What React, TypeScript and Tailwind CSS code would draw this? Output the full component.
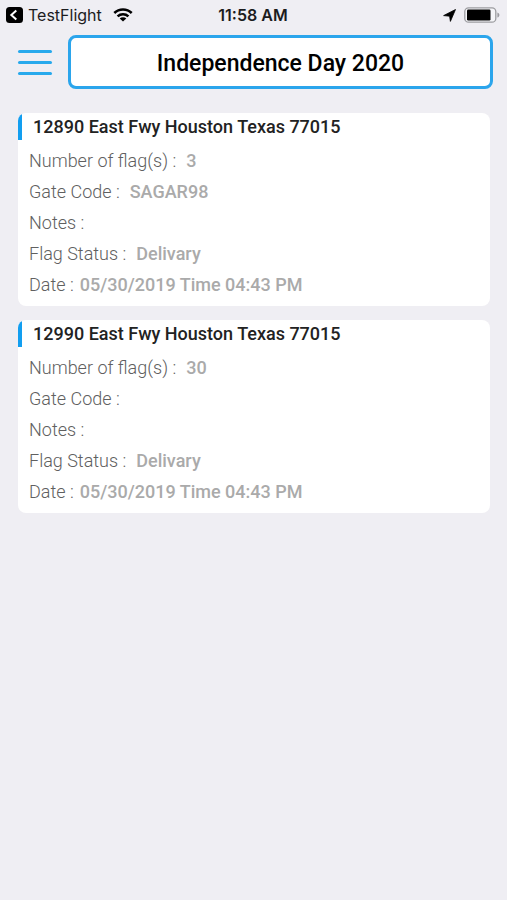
import React from 'react';

interface Stop {
  address: string;
  flags: string;
  gateCode: string;
  notes: string;
  status: string;
  date: string;
}

const stops: Stop[] = [
  {
    address: '12890 East Fwy Houston Texas 77015',
    flags: '3',
    gateCode: 'SAGAR98',
    notes: '',
    status: 'Delivary',
    date: '05/30/2019 Time 04:43 PM',
  },
  {
    address: '12990 East Fwy Houston Texas 77015',
    flags: '30',
    gateCode: '',
    notes: '',
    status: 'Delivary',
    date: '05/30/2019 Time 04:43 PM',
  },
];

const StatusBar: React.FC = () => (
  <div className="grid grid-cols-[1fr_auto_1fr] items-center h-[30px] pl-[6px] pr-[7px] font-['Inter',sans-serif] text-[#1c1c1e]">
    <div className="flex items-center">
      <button type="button" className="flex items-center" aria-label="Back to TestFlight">
        <svg width="17" height="16" viewBox="0 0 17 16" aria-hidden="true">
          <rect width="17" height="16" rx="3.5" fill="#000" />
          <path d="M10.3 3.4 5.3 8l5 4.6" fill="none" stroke="#fff" strokeWidth="2" />
        </svg>
        <span className="ml-[5px] text-[16px] leading-5">TestFlight</span>
      </button>
      <svg className="ml-[11px]" width="20" height="14" viewBox="0 0 20 14" fill="none" stroke="#000" strokeWidth="2.6" aria-hidden="true">
        <path d="M1.3 5a12.6 12.6 0 0 1 17.4 0" />
        <path d="M4.6 8.4a7.9 7.9 0 0 1 10.8 0" />
        <path d="M10 13.6 6.7 10.6a4.6 4.6 0 0 1 6.6 0z" fill="#000" stroke="none" />
      </svg>
    </div>
    <span className="text-[16px] leading-5 font-semibold">11:58 AM</span>
    <div className="flex items-center justify-end gap-2">
      <svg width="13" height="13" viewBox="0 0 13 13" aria-hidden="true">
        <path d="M12.5.5 7.4 12.4 6.6 7.2.6 6.6z" fill="#000" stroke="#000" strokeWidth="0.8" strokeLinejoin="round" />
      </svg>
      <svg width="36" height="16" viewBox="0 0 36 16" aria-hidden="true">
        <rect x="0.8" y="0.8" width="31" height="14.4" rx="3.8" fill="#f5f5f8" stroke="#9c9ca0" strokeWidth="1.3" />
        <rect x="3" y="2.6" width="23.5" height="10.8" rx="1.2" fill="#000" />
        <path d="M33.4 5.4c1.3.5 2 1.4 2 2.6s-.7 2.1-2 2.6z" fill="#9c9ca0" />
      </svg>
    </div>
  </div>
);

const Row: React.FC<{ label: string; value: string; tight?: boolean }> = ({ label, value, tight }) => (
  <div className={`flex items-center leading-[31px] ${tight ? 'gap-[6px]' : 'gap-[10px]'}`}>
    <dt className="font-light text-[#606060]">{label} :</dt>
    <dd className="font-medium text-[#aaa]">{value}</dd>
  </div>
);

const StopCard: React.FC<{ stop: Stop }> = ({ stop }) => (
  <article className="bg-white rounded-lg overflow-hidden pb-[6px]">
    <h2 className="border-l-4 border-[#129ef0] pl-[11px] text-[18px] leading-[27px] font-medium text-[#222]">
      {stop.address}
    </h2>
    <dl className="mt-[5px] px-[11px] text-[18px]">
      <Row label="Number of flag(s)" value={stop.flags} />
      <Row label="Gate Code" value={stop.gateCode} />
      <Row label="Notes" value={stop.notes} />
      <Row label="Flag Status" value={stop.status} />
      <Row label="Date" value={stop.date} tight />
    </dl>
  </article>
);

export default function App() {
  return (
    <div className="min-h-screen bg-[#efeef3] font-['Roboto',sans-serif]">
      <StatusBar />
      <header className="flex items-center pt-[5px] pl-[18px] pr-[14px]">
        <button type="button" aria-label="Menu" className="flex flex-col gap-2 w-[34px] shrink-0">
          <span className="w-full h-[3px] rounded-full bg-[#28a9ec]" />
          <span className="w-full h-[3px] rounded-full bg-[#28a9ec]" />
          <span className="w-full h-[3px] rounded-full bg-[#28a9ec]" />
        </button>
        <h1 className="flex-1 ml-4 h-[54px] pt-1 flex items-center justify-center rounded-lg border-3 border-[#2ba5ec] bg-white text-[23px] font-medium text-black">
          Independence Day 2020
        </h1>
      </header>
      <main className="flex flex-col gap-[14px] pt-6 pb-6 pl-[18px] pr-[17px]">
        {stops.map((stop) => (
          <StopCard key={stop.address} stop={stop} />
        ))}
      </main>
    </div>
  );
}
